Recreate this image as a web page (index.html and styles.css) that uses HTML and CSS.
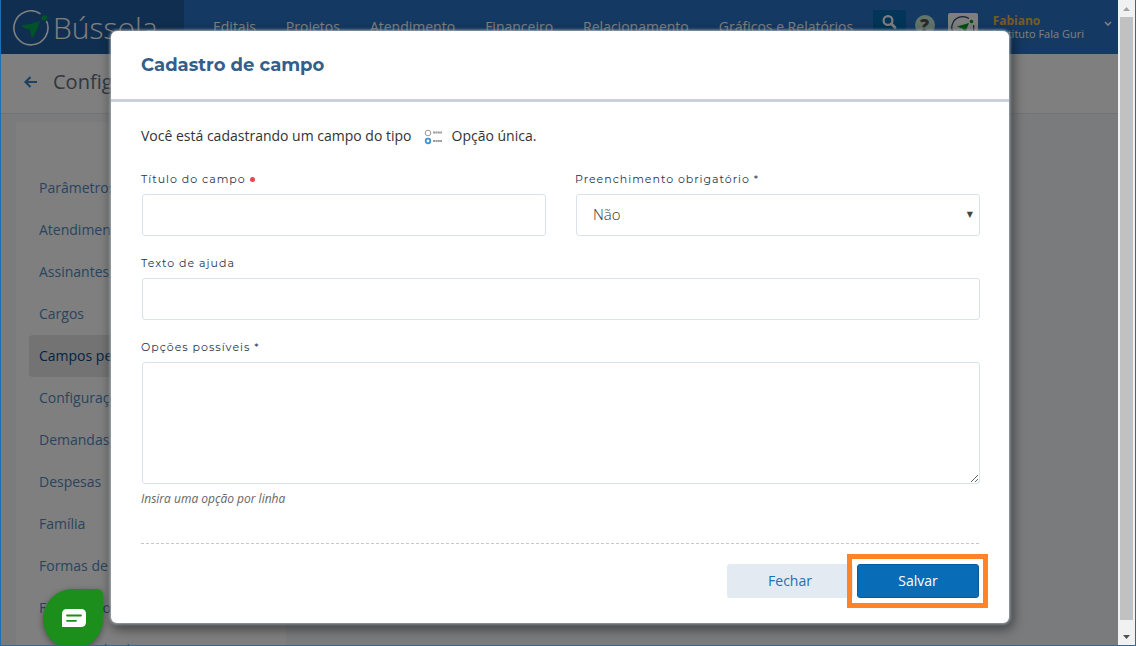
FILE: index.html
```html
<!DOCTYPE html>
<html lang="pt-BR">
<head>
<meta charset="utf-8">
<meta name="viewport" content="width=device-width, initial-scale=1">
<title>Bússola - Cadastro de campo</title>
<link rel="stylesheet" href="styles.css">
</head>
<body>
<div class="frame">
  <div class="app">
    <header class="topbar">
      <a class="brand" href="#">
        <svg class="brand-mark" viewBox="0 0 36 36" aria-hidden="true">
          <path d="M27.500 3.800A17 17 0 1 0 33.500 11" fill="none" stroke="#fff" stroke-width="1.600"/>
          <path d="M9.500 15Q18 14.500 27 11Q24.500 19 20.500 26.500Q18.500 29 18 25.500L17 20L10.500 17.500Q8 16 9.500 15Z" fill="#00a651"/>
          <circle cx="31.500" cy="8" r="2.800" fill="#00a651"/>
        </svg>
        <span class="brand-name">Bússola</span>
      </a>
      <nav class="menu">
        <a href="#">Editais</a><a href="#">Projetos</a><a href="#">Atendimento</a><a href="#">Financeiro</a><a href="#">Relacionamento</a><a href="#">Gráficos e Relatórios</a>
      </nav>
      <div class="tools">
        <button class="search" type="button" aria-label="Buscar">
          <svg viewBox="0 0 16 16" aria-hidden="true"><circle cx="7" cy="6.500" r="4.400" fill="none" stroke="#fff" stroke-width="2.200"/><path d="M10.500 10L14 13.500" stroke="#fff" stroke-width="2.800" stroke-linecap="round"/></svg>
        </button>
        <button class="help" type="button" aria-label="Ajuda">?</button>
        <svg class="avatar" viewBox="0 0 30 30" aria-hidden="true">
          <rect width="30" height="30" rx="2" fill="#fff"/>
          <path d="M21 5.500A11 11 0 1 0 25.500 12" fill="none" stroke="#2b3e63" stroke-width="1.200"/>
          <path d="M9 13.500L21 10L17 20L15 16Z" fill="#00a320"/><circle cx="23.500" cy="8.500" r="1.800" fill="#00a320"/>
        </svg>
      </div>
      <div class="account"><strong>Fabiano</strong><span>Instituto Fala Guri</span></div>
      <svg class="caret" viewBox="0 0 8 6" aria-hidden="true"><path d="M1 1L4 4L7 1" fill="none" stroke="#fff" stroke-width="1.600"/></svg>
    </header>
    <div class="page-head">
      <svg viewBox="0 0 14 12" aria-hidden="true"><path d="M13 6H2M6.500 1L1.500 6L6.500 11" fill="none" stroke="#3f80bd" stroke-width="2.200"/></svg>
      <h1>Configurações</h1>
    </div>
    <nav class="sidebar">
      <a href="#">Parâmetros gerais</a>
      <a href="#">Atendimentos</a>
      <a href="#">Assinantes</a>
      <a href="#">Cargos</a>
      <a class="active" href="#">Campos personalizados</a>
      <a href="#">Configurações</a>
      <a href="#">Demandas</a>
      <a href="#">Despesas</a>
      <a href="#">Família</a>
      <a href="#">Formas de contato</a>
      <a href="#">Formulários</a>
      <a href="#">Modelos de alerta</a>
    </nav>
    <div class="overlay">
      <section class="modal" role="dialog" aria-labelledby="modal-title">
        <h2 id="modal-title">Cadastro de campo</h2>
        <form class="form">
          <p class="intro">Você está cadastrando um campo do tipo
            <svg viewBox="0 0 20 16" aria-hidden="true">
              <circle cx="4" cy="4" r="2.800" fill="#fff" stroke="#999" stroke-width="1"/>
              <circle cx="4" cy="12" r="2.300" fill="#fff" stroke="#3d92cf" stroke-width="1.800"/>
              <path d="M9 3.500H18M9 12H18" stroke="#999" stroke-width="1.800" stroke-dasharray="2 .4"/>
            </svg>Opção única.</p>
          <div class="row">
            <div class="field">
              <label for="titulo">Título do campo <i class="dot"></i></label>
              <input id="titulo" type="text">
            </div>
            <div class="field">
              <label for="obrig">Preenchimento obrigatório *</label>
              <div class="select-box"><select id="obrig"><option>Não</option><option>Sim</option></select></div>
            </div>
          </div>
          <div class="field">
            <label for="ajuda">Texto de ajuda</label>
            <input id="ajuda" type="text">
          </div>
          <div class="field">
            <label for="opcoes">Opções possíveis *</label>
            <textarea id="opcoes"></textarea>
            <small>Insira uma opção por linha</small>
          </div>
          <div class="actions">
            <button class="btn" type="button">Fechar</button>
            <button class="btn primary" type="button">Salvar</button>
          </div>
        </form>
      </section>
    </div>
    <button class="chat" type="button" aria-label="Chat">
      <svg viewBox="0 0 24 18" aria-hidden="true"><path d="M5 0H19Q24 0 24 5V13Q24 18 19 18H0V5Q0 0 5 0Z" fill="#fff"/><path d="M5 6.500H19M5 11.800H14" stroke="#1b8e1b" stroke-width="1.800" stroke-linecap="round"/></svg>
    </button>
  </div>
  <div class="scroll" aria-hidden="true">
    <svg viewBox="0 0 17 17"><path d="M5 11L8.500 7L12 11Z" fill="#a3a3a3"/></svg>
    <div class="thumb"></div>
    <svg viewBox="0 0 17 17"><path d="M5 7L8.500 11L12 7Z" fill="#505050"/></svg>
  </div>
</div>
</body>
</html>
```
FILE: styles.css
```css
* { box-sizing: border-box; }
body { margin: 0; font-family: "Open Sans", sans-serif; font-size: 14px; color: #333; }
a { color: inherit; text-decoration: none; }
button, input, select, textarea { font: inherit; }
.frame { display: flex; height: 100vh; overflow: hidden; border: 1px solid #1b6fb5; border-top: 0; }
.app { position: relative; flex: 1; min-width: 0; overflow: hidden; background: #f4f6fa; }

.topbar { display: flex; height: 54px; background: #2872c6; color: #fff; }
.brand { display: flex; align-items: center; gap: 4px; width: 183px; flex: none; padding: 2px 0 0 12px; background: #205ea0; }
.brand-mark { width: 36px; height: 36px; }
.brand-name { font-size: 30px; font-weight: 300; line-height: 36px; }
.menu { display: flex; gap: 30px; padding-left: 29px; line-height: 54px; white-space: nowrap; }
.tools { display: flex; gap: 9px; margin-left: auto; padding-top: 10px; }
.search { width: 33px; height: 34px; padding: 0; border: 0; background: #046ab0; }
.search svg { width: 16px; height: 16px; margin-bottom: 6px; }
.help { width: 20px; height: 20px; margin-top: 5px; padding: 0; border: 0; border-radius: 50%; background: #c5eadb; color: #54544c; font-size: 18px; font-weight: 800; line-height: 20px; }
.avatar { width: 30px; height: 30px; margin: 3px 0 0 4px; }
.account { display: flex; flex-direction: column; padding: 14px 0 0 15px; font-size: 11px; line-height: 13px; white-space: nowrap; }
.account strong { color: #efb93a; font-size: 12px; }
.caret { width: 8px; height: 6px; margin: 21px 6px 0 20px; }

.page-head { display: flex; align-items: center; gap: 15px; height: 60px; padding: 0 0 4px 23px; background: #fff; border-bottom: 1px solid #e2e8ee; }
.page-head svg { width: 14px; height: 12px; }
h1 { margin: 0; font-size: 20px; font-weight: 400; color: #66707c; }
.sidebar { display: flex; flex-direction: column; width: 270px; margin: 8px 0 0 15px; padding: 45px 13px 0; background: #fff; color: #5289bc; line-height: 42px; }
.sidebar a { padding-left: 10px; }
.sidebar .active { background: #e6e6e6; border-radius: 4px; color: #004b8d; }

.overlay { position: absolute; inset: 0; display: flex; justify-content: center; align-items: flex-start; padding: 31px 109px 0 110px; background: rgba(0, 0, 0, .5); }
.modal { flex: 1; background: #fff; border-radius: 6px; box-shadow: 0 0 3px 1px #a9b7c1, 2px 4px 12px 2px rgba(0, 0, 0, .5); }
h2 { margin: 0; padding: 20px 30px; border-bottom: 3px solid #cbd1db; color: #335f8a; font-family: Montserrat, "Open Sans", sans-serif; font-size: 18px; line-height: 28px; }
.form { padding: 23px 29px 25px 30px; }
.intro { display: flex; align-items: center; margin: 0 0 22px; line-height: 22px; }
.intro svg { width: 20px; height: 16px; margin: 2px 8px 0 12px; }
.row { display: grid; grid-template-columns: 1fr 1fr; gap: 29px; }
.field { display: flex; flex-direction: column; margin-bottom: 17px; }
label { margin-bottom: 5px; color: #26344d; font-family: Montserrat, "DejaVu Sans", sans-serif; font-size: 11px; line-height: 20px; letter-spacing: 1px; }
.dot { display: inline-block; width: 5px; height: 5px; border-radius: 50%; background: #e8474c; vertical-align: 1px; }
.field > input, .field > textarea, .select-box { width: auto; margin-left: 1px; }
input, textarea, select { display: block; width: 100%; height: 42px; margin: 0; padding: 0 16px; border: 1px solid #d8e2ec; border-radius: 3px; background: #fff; color: #4c4f55; }
textarea { height: 122px; padding: 8px 16px; resize: vertical; }
select { appearance: none; padding-bottom: 2px; color: #333; font-size: 15px; font-weight: 300; }
.select-box { position: relative; }
.select-box::after { content: "▼"; position: absolute; right: 7px; top: 0; color: #444; font-family: "DejaVu Sans", sans-serif; font-size: 8px; line-height: 41px; pointer-events: none; }
small { margin-top: 6px; color: #666; font-size: 12px; font-style: italic; line-height: 18px; }
.actions { display: flex; justify-content: flex-end; gap: 4px; margin: 35px 1px 0 0; padding-top: 20px; border-top: 1px dashed #c4c8cf; }
.btn { width: 126px; height: 34px; padding: 0 0 2px; border: 0; border-radius: 3px; background: #e3eaf2; color: #1c6fb5; }
.primary { position: relative; width: 122px; background: #086db6; border: 1px solid #075c9c; color: #fff; }
.primary::after { content: ""; position: absolute; inset: -11px -10px -11px -11px; border: 5px solid #ff8427; }

.chat { position: absolute; left: 42px; bottom: -4px; width: 60px; height: 60px; padding: 0 0 4px 1px; border: 0; border-radius: 50% 6px 50% 50%; background: #1b8e1b; box-shadow: 0 2px 6px rgba(0, 0, 0, .4); }
.chat svg { width: 24px; height: 18px; vertical-align: middle; }
.scroll { display: flex; flex-direction: column; width: 17px; background: #f1f1f1; }
.scroll svg { width: 17px; height: 17px; flex: none; }
.thumb { flex: 1; margin: 0 2px 8px; background: #c1c1c1; }
```
